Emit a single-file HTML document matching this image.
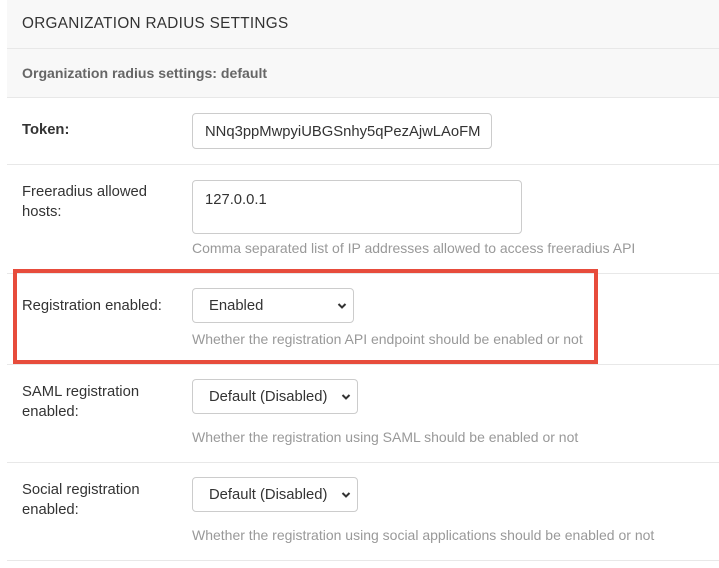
<!DOCTYPE html>
<html><head><meta charset="utf-8"><style>
*{box-sizing:border-box;margin:0;padding:0}
body{width:719px;height:568px;background:#fff;font-family:"Liberation Sans",Arial,sans-serif;position:relative;overflow:hidden;color:#333}
.a{position:absolute}
.hl{position:absolute;left:7px;right:0;height:1px;background:#e8e8e8}
.lbl{position:absolute;left:22px;font-size:14.8px;line-height:20px;color:#333}
.inp{position:absolute;left:192px;border:1px solid #ccc;border-radius:4px;background:#fff;font-size:14.8px;color:#333}
.help{position:absolute;left:192px;font-size:14px;color:#999}
.sel{position:absolute;left:192px;border:1px solid #ccc;border-radius:4px;background:#fff;font-size:14.8px;color:#333;height:35px;line-height:35px;padding-left:16px}
.sel svg{position:absolute;right:6px;top:13px}
</style></head><body>
<div class="a" style="left:7px;top:0;right:0;height:97px;background:#f8f8f8"></div>
<div class="a" style="left:22px;top:15px;font-size:15.3px;letter-spacing:0.3px;color:#333">ORGANIZATION RADIUS SETTINGS</div>
<div class="hl" style="top:48px"></div>
<div class="a" style="left:22px;top:65px;font-size:14.1px;font-weight:bold;color:#666">Organization radius settings: default</div>
<div class="hl" style="top:97px"></div>

<div class="lbl" style="top:120px;font-weight:bold">Token:</div>
<div class="inp" style="top:113px;width:300px;height:36px;line-height:36px;padding-left:12px">NNq3ppMwpyiUBGSnhy5qPezAjwLAoFM</div>
<div class="hl" style="top:164px"></div>

<div class="lbl" style="top:182px">Freeradius allowed<br>hosts:</div>
<div class="inp" style="top:180px;width:330px;height:54px;padding:9px 12px;line-height:20px">127.0.0.1</div>
<div class="help" style="top:240px">Comma separated list of IP addresses allowed to access freeradius API</div>
<div class="hl" style="top:273px"></div>

<div class="lbl" style="top:296px">Registration enabled:</div>
<div class="sel" style="top:288px;width:162px">Enabled<svg width="10" height="8" viewBox="0 0 10 8"><path d="M1.5 2l3.5 3.5L8.5 2" stroke="#333" stroke-width="2" fill="none"/></svg></div>
<div class="help" style="top:331px">Whether the registration API endpoint should be enabled or not</div>
<div class="hl" style="top:364px"></div>
<div class="a" style="left:13px;top:269px;width:585px;height:95px;border:4px solid #e74c3c"></div>

<div class="lbl" style="top:382px">SAML registration<br>enabled:</div>
<div class="sel" style="top:379px;width:166px">Default (Disabled)<svg width="10" height="8" viewBox="0 0 10 8"><path d="M1.5 2l3.5 3.5L8.5 2" stroke="#333" stroke-width="2" fill="none"/></svg></div>
<div class="help" style="top:429px">Whether the registration using SAML should be enabled or not</div>
<div class="hl" style="top:462px"></div>

<div class="lbl" style="top:480px">Social registration<br>enabled:</div>
<div class="sel" style="top:477px;width:166px">Default (Disabled)<svg width="10" height="8" viewBox="0 0 10 8"><path d="M1.5 2l3.5 3.5L8.5 2" stroke="#333" stroke-width="2" fill="none"/></svg></div>
<div class="help" style="top:527px">Whether the registration using social applications should be enabled or not</div>
<div class="hl" style="top:560px"></div>
</body></html>
